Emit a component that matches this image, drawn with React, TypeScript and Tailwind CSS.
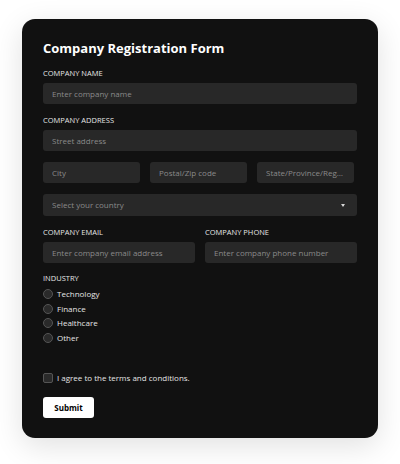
import { ChangeEvent, useState } from "react";

const font = { fontFamily: '"Open Sans", "Noto Sans", sans-serif' };

function Label({ children }: { children: string }) {
  return <div className="mb-[5px] text-[7.5px] leading-[10px] text-neutral-200 uppercase">{children}</div>;
}

function Field({ placeholder }: { placeholder: string }) {
  return (
    <input
      placeholder={placeholder}
      className="block h-[21px] w-full min-w-0 truncate rounded-[3px] bg-[#282828] px-[9px] text-[8px] text-neutral-200 outline-none placeholder:text-[#8a8a8a]"
    />
  );
}

const industries = ["Technology", "Finance", "Healthcare", "Other"];

export default function App() {
  const [industry, setIndustry] = useState("");
  const [agreed, setAgreed] = useState(false);

  return (
    <div className="min-h-[464px] bg-white px-[22px] pt-[19px]" style={font}>
      <form
        className="rounded-[13px] bg-[#111111] px-[21px] pt-[21px] pb-[20px] shadow-[0_8px_30px_rgba(0,0,0,0.12)]"
        onSubmit={(e) => e.preventDefault()}
      >
        <h1 className="text-[13px] leading-[16px] font-bold text-white">Company Registration Form</h1>

        <div className="mt-[12px]">
          <Label>Company Name</Label>
          <Field placeholder="Enter company name" />
        </div>

        <div className="mt-[11px]">
          <Label>Company Address</Label>
          <Field placeholder="Street address" />
          <div className="mt-[11px] grid grid-cols-3 gap-[10px] pr-[3px]">
            <Field placeholder="City" />
            <Field placeholder="Postal/Zip code" />
            <Field placeholder="State/Province/Region" />
          </div>
          <div className="relative mt-[11px]">
            <select
              defaultValue=""
              className="block h-[22px] w-full appearance-none rounded-[3px] bg-[#282828] px-[9px] text-[8px] text-[#8a8a8a] outline-none"
            >
              <option value="" disabled>
                Select your country
              </option>
            </select>
            <span className="pointer-events-none absolute right-[12px] top-[10px] h-0 w-0 border-x-[2.5px] border-t-[3px] border-x-transparent border-t-neutral-300" />
          </div>
        </div>

        <div className="mt-[11px] grid grid-cols-2 gap-[10px]">
          <div>
            <Label>Company Email</Label>
            <Field placeholder="Enter company email address" />
          </div>
          <div>
            <Label>Company Phone</Label>
            <Field placeholder="Enter company phone number" />
          </div>
        </div>

        <div className="mt-[10px]">
          <div className="mb-[4px] text-[7.5px] leading-[10px] text-neutral-200 uppercase">Industry</div>
          {industries.map((name) => (
            <label key={name} className="flex h-[14.6px] cursor-pointer items-center gap-[4px]">
              <input
                type="radio"
                name="industry"
                checked={industry === name}
                onChange={() => setIndustry(name)}
                className="block h-[10px] w-[10px] appearance-none rounded-full border border-[#555] bg-[#2a2a2a] checked:bg-white"
              />
              <span className="text-[8px] text-neutral-200">{name}</span>
            </label>
          ))}
        </div>

        <label className="mt-[27px] flex h-[12px] cursor-pointer items-center gap-[4px]">
          <input
            type="checkbox"
            checked={agreed}
            onChange={(e: ChangeEvent<HTMLInputElement>) => setAgreed(e.target.checked)}
            className="block h-[10px] w-[10px] appearance-none rounded-[2px] border border-[#555] bg-[#2a2a2a] checked:bg-white"
          />
          <span className="text-[8px] text-neutral-200">I agree to the terms and conditions.</span>
        </label>

        <button
          type="submit"
          className="mt-[13px] block h-[21px] w-[51px] rounded-[3px] bg-white text-[8px] font-bold text-black"
        >
          Submit
        </button>
      </form>
    </div>
  );
}
